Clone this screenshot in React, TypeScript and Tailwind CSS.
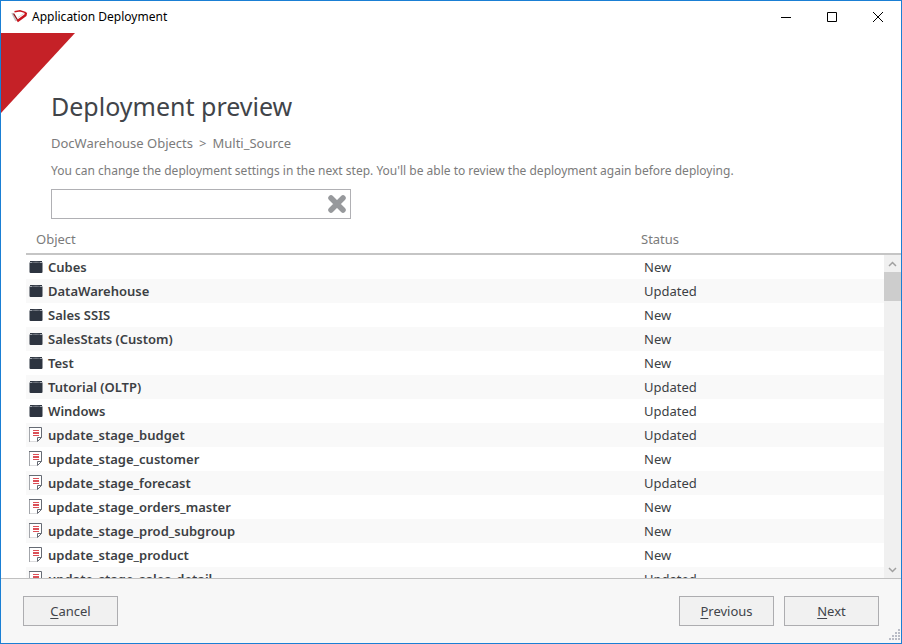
type Kind = "folder" | "document";

interface DeployObject {
  name: string;
  status: "New" | "Updated";
  kind: Kind;
}

const objects: DeployObject[] = [
  { name: "Cubes", status: "New", kind: "folder" },
  { name: "DataWarehouse", status: "Updated", kind: "folder" },
  { name: "Sales SSIS", status: "New", kind: "folder" },
  { name: "SalesStats (Custom)", status: "New", kind: "folder" },
  { name: "Test", status: "New", kind: "folder" },
  { name: "Tutorial (OLTP)", status: "Updated", kind: "folder" },
  { name: "Windows", status: "Updated", kind: "folder" },
  { name: "update_stage_budget", status: "Updated", kind: "document" },
  { name: "update_stage_customer", status: "New", kind: "document" },
  { name: "update_stage_forecast", status: "Updated", kind: "document" },
  { name: "update_stage_orders_master", status: "New", kind: "document" },
  { name: "update_stage_prod_subgroup", status: "New", kind: "document" },
  { name: "update_stage_product", status: "New", kind: "document" },
  { name: "update_stage_sales_detail", status: "Updated", kind: "document" },
];

function FolderIcon() {
  return (
    <svg width="14" height="16" viewBox="0 0 14 16" aria-hidden="true" className="shrink-0">
      <path d="M1 2h12v1H1z" fill="#2d3440" />
      <path d="M.5 3.500h13V13a1 1 0 0 1-1 1h-11a1 1 0 0 1-1-1z" fill="#2d3440" />
      <path d="M1 3.500h2M11 3.500h2" stroke="#9ea3ab" strokeWidth="1" />
      <path d="M3 3.500q4-1 8 0" stroke="#5a606b" strokeWidth="1" fill="none" />
    </svg>
  );
}

function DocumentIcon() {
  return (
    <svg width="14" height="16" viewBox="0 0 14 16" aria-hidden="true" className="shrink-0">
      <path d="M.5.5h12v10l-4 4h-8z" fill="#fff" />
      <path d="M.5 14.500h8" stroke="#dcdcde" fill="none" />
      <path d="M.5 15V0" stroke="#a3a6ab" fill="none" />
      <path d="M0 .5h12.500v10l-4 4v-4h4" stroke="#666b74" fill="none" />
      <path d="M4 3h6v1H4zM4 5h6v2H4zM4 8h6v1H4z" fill="#dc4f57" />
    </svg>
  );
}

function AppLogo() {
  return (
    <svg width="17" height="14" viewBox="0 0 17 14" aria-hidden="true">
      <path d="M1 3l4 8" stroke="#bfc1c4" strokeWidth="1.6" fill="none" />
      <path d="M2.500 3.500l4 6.500" stroke="#8e1016" strokeWidth="1.4" fill="none" />
      <path d="M3.500 1.800L9 .8l5.800 1.800" stroke="#c8141d" strokeWidth="1.5" fill="none" />
      <path d="M15 2.600l-.6 2.600L6.200 11.300" stroke="#c8141d" strokeWidth="2.400" fill="none" />
      <path d="M13 3.500L7 7.500" stroke="#d8d8d8" strokeWidth="1" fill="none" />
    </svg>
  );
}

function TitleBar() {
  return (
    <header className="flex h-8 shrink-0 items-center justify-between pl-2.5">
      <div className="flex items-center gap-1 text-xs text-black">
        <AppLogo />
        <span>Application Deployment</span>
      </div>
      <div className="flex h-full">
        <button aria-label="Minimize" className="flex w-[46px] items-center justify-center">
          <svg width="10" height="10" aria-hidden="true"><path d="M0 5.500h10" stroke="#000" /></svg>
        </button>
        <button aria-label="Maximize" className="flex w-[46px] items-center justify-center">
          <svg width="10" height="10" aria-hidden="true"><path d="M.5.5h9v9h-9z" stroke="#000" fill="none" /></svg>
        </button>
        <button aria-label="Close" className="flex w-[46px] items-center justify-center">
          <svg width="10" height="10" aria-hidden="true"><path d="M0 0l10 10M10 0L0 10" stroke="#000" /></svg>
        </button>
      </div>
    </header>
  );
}

function ScrollBar() {
  return (
    <div className="flex w-[17px] shrink-0 flex-col">
      <div className="h-8 shrink-0 border-b-2 border-[#c5c5c5]" />
      <div className="flex flex-1 flex-col bg-[#f0f0f0]">
        <button aria-label="Scroll up" className="flex h-[17px] items-center justify-center">
          <svg width="9" height="6" aria-hidden="true"><path d="M1 5l3.500-3.500L8 5" stroke="#a0a0a0" strokeWidth="1.5" fill="none" /></svg>
        </button>
        <div className="h-[29px] bg-[#cdcdcd]" />
        <button aria-label="Scroll down" className="mt-auto flex h-[17px] items-center justify-center">
          <svg width="9" height="6" aria-hidden="true"><path d="M1 1l3.500 3.500L8 1" stroke="#a0a0a0" strokeWidth="1.5" fill="none" /></svg>
        </button>
      </div>
    </div>
  );
}

function DialogButton({ accessKey, rest }: { accessKey: string; rest: string }) {
  return (
    <button className="h-[30px] w-[95px] border border-[#adadb0] bg-[#f1f1f1] pt-px text-[13px] text-[#41444a]">
      <span className="underline underline-offset-2">{accessKey}</span>
      {rest}
    </button>
  );
}

function ResizeGrip() {
  const dots = [[9, 0], [6, 3], [9, 3], [3, 6], [6, 6], [9, 6], [0, 9], [3, 9], [6, 9], [9, 9]];
  return (
    <svg width="12" height="12" aria-hidden="true" className="absolute right-0 bottom-0.5">
      {dots.map(([x, y]) => (
        <rect key={`${x}-${y}`} x={x} y={y} width="2" height="2" fill="#b9bcc6" />
      ))}
    </svg>
  );
}

export default function App() {
  return (
    <div className="flex h-screen flex-col overflow-hidden border border-[#1a7fd4] bg-white font-['Noto_Sans','Open_Sans',sans-serif] text-[13px]">
      <TitleBar />
      <main className="relative flex min-h-0 flex-1 flex-col">
        <svg width="74" height="80" aria-hidden="true" className="absolute top-0 left-0">
          <path d="M0 0h74L0 80z" fill="#c52127" />
        </svg>
        <section className="relative px-[50px] pt-14">
          <h1 className="text-[25px] leading-[34px] text-[#414449]">Deployment preview</h1>
          <p className="mt-2.5 flex gap-1.5 leading-5 text-[#7b7b7b]">
            <span>DocWarehouse Objects</span>
            <span>&gt;</span>
            <span>Multi_Source</span>
          </p>
          <p className="mt-2 text-xs leading-5 text-[#7b7b7b]">
            You can change the deployment settings in the next step. You'll be able to review the deployment again before deploying.
          </p>
          <div className="mt-2 flex h-[30px] w-[300px] items-center border border-[#b0b0b4] pr-1">
            <input aria-label="Filter objects" className="h-full min-w-0 flex-1 px-2 outline-none" />
            <button aria-label="Clear filter">
              <svg width="18" height="18" viewBox="0 0 18 18" aria-hidden="true">
                <path d="M3 3l12 12M15 3L3 15" stroke="#97999c" strokeWidth="5.500" strokeLinecap="round" />
              </svg>
            </button>
          </div>
        </section>
        <section className="mt-1 ml-[25px] flex min-h-0 flex-1">
          <div className="min-w-0 flex-1 overflow-hidden">
            <table className="w-full table-fixed border-separate border-spacing-0 text-left">
              <thead>
                <tr className="text-[#7b7b7b]">
                  <th className="h-8 border-b-2 border-[#c5c5c5] p-0 pt-1 pl-2.5 font-normal">Object</th>
                  <th className="h-8 w-[243px] border-b-2 border-[#c5c5c5] p-0 pt-1 font-normal">Status</th>
                </tr>
              </thead>
              <tbody>
                {objects.map((item) => (
                  <tr key={item.name} className="text-[#3c3f44] even:bg-[#f9f9f9]">
                    <td className="h-6 p-0 pl-[3px] leading-6">
                      <div className="flex h-6 items-center gap-[5px] font-semibold">
                        {item.kind === "folder" ? <FolderIcon /> : <DocumentIcon />}
                        <span>{item.name}</span>
                      </div>
                    </td>
                    <td className="h-6 p-0 pl-[3px] leading-6">{item.status}</td>
                  </tr>
                ))}
              </tbody>
            </table>
          </div>
          <ScrollBar />
        </section>
      </main>
      <footer className="relative flex h-[65px] shrink-0 items-center gap-2.5 border-t border-[#c0c0c0] bg-[#f7f7f7] px-[22px]">
        <DialogButton accessKey="C" rest="ancel" />
        <span className="flex-1" />
        <DialogButton accessKey="P" rest="revious" />
        <DialogButton accessKey="N" rest="ext" />
        <ResizeGrip />
      </footer>
    </div>
  );
}
